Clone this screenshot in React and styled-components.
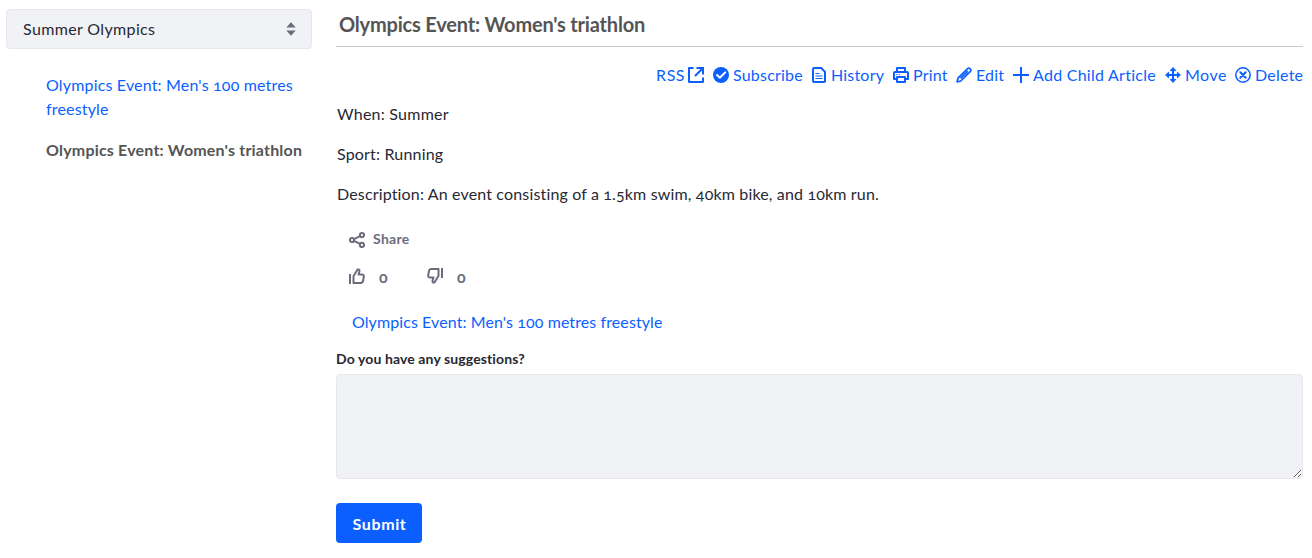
import React from "react";
import styled, { createGlobalStyle } from "styled-components";

const GlobalStyle = createGlobalStyle`
  *, *::before, *::after { box-sizing: border-box; }
  body {
    margin: 0;
    background: #fff;
    color: #272833;
    font-family: Lato, "Open Sans", sans-serif;
    font-size: 16px;
    line-height: 24px;
    font-variant-numeric: oldstyle-nums;
    font-variant-ligatures: none;
  }
`;

const Page = styled.div`
  display: grid;
  grid-template-columns: 306px 967px;
  column-gap: 24px;
  padding: 9px 9px 0 6px;
  height: 558px;
  overflow: hidden;
`;

const Text = styled.span`
  letter-spacing: ${(p) => p.$track || 0}px;
  white-space: nowrap;
`;

const Sidebar = styled.aside``;

const Select = styled.div`
  display: flex;
  align-items: center;
  justify-content: space-between;
  height: 40px;
  padding: 0 12px 0 16px;
  background: #f1f2f5;
  border: 1px solid #e7e7ed;
  border-radius: 4px;
`;

const Tree = styled.ul`
  list-style: none;
  margin: 0;
  padding: 24px 0 0 40px;
`;

const TreeItem = styled.li`
  margin-bottom: 17px;
  color: ${(p) => (p.$current ? "#555" : "#0b5fff")};
  font-weight: ${(p) => (p.$current ? 700 : 400)};
`;

const Main = styled.main``;

const Title = styled.h1`
  margin: 0;
  height: 38px;
  padding: 3px 0 0 3px;
  border-bottom: 1px solid #c8c9ca;
  color: #555;
  font-size: 20px;
  font-weight: 700;
  line-height: 24px;
`;

const Actions = styled.nav`
  display: flex;
  justify-content: flex-end;
  gap: 8px;
  height: 24px;
  margin-top: 16px;
`;

const Action = styled.a`
  display: flex;
  align-items: center;
  justify-content: ${(p) => (p.$end ? "flex-end" : "flex-start")};
  gap: ${(p) => (p.$end ? 3 : 4)}px;
  width: ${(p) => p.$width}px;
  margin-right: ${(p) => (p.$end ? 1 : 0)}px;
  color: #0b5fff;
`;

const Body = styled.div`
  padding: 15px 0 0 1px;
`;

const Paragraph = styled.p`
  margin: 0 0 16px;
`;

const Share = styled.button`
  display: flex;
  align-items: center;
  gap: 8px;
  height: 32px;
  margin: 18px 0 0;
  padding: 0 13px;
  border: 0;
  background: none;
  color: #6b6c7e;
  font: 700 14px/21px Lato, sans-serif;

  ${Text} {
    margin-top: -4px;
  }
`;

const Ratings = styled.div`
  display: flex;
  height: 32px;
  margin-top: 4px;
  padding-left: 13px;
`;

const Rating = styled.div`
  display: flex;
  align-items: center;
  gap: 14px;
  width: 78px;
  color: #6b6c7e;
  font-weight: 700;

  ${Text} {
    margin-top: 1px;
  }
`;

const ChildLink = styled.a`
  display: block;
  margin: 18px 0 0 16px;
  color: #0b5fff;
`;

const Label = styled.label`
  display: block;
  margin-top: 14px;
  font-size: 14px;
  font-weight: 700;
  line-height: 21px;
`;

const TextArea = styled.textarea`
  display: block;
  width: 967px;
  height: 105px;
  margin: 5px 0 24px;
  background: #f1f2f5;
  border: 1px solid #e7e7ed;
  border-radius: 4px;
  resize: vertical;
`;

const Submit = styled.button`
  width: 86px;
  height: 40px;
  padding: 2px 0 0 1px;
  border: 0;
  border-radius: 4px;
  background: #0b5fff;
  color: #fff;
  font: 700 16px/24px Lato, sans-serif;
`;

const Svg = styled.svg`
  display: block;
  flex: none;
  fill: none;
  stroke: currentColor;
  stroke-width: 2;
`;

const SortIcon = styled(Svg)`
  color: #6b6c7e;
`;

const Flip = styled(Svg)`
  transform: rotate(180deg);
`;

const shapes = {
  rss: (
    <>
      <path d="M5.5 1H1v14h14v-4.5" strokeLinejoin="round" />
      <path d="M8.5 1H15v6.5M14.5 1.5 7 9" />
    </>
  ),
  subscribe: (
    <>
      <circle cx="8" cy="8" r="8" fill="currentColor" stroke="none" />
      <path d="m4 8 2.8 2.8L12.2 5.4" stroke="#fff" strokeLinecap="round" strokeLinejoin="round" />
    </>
  ),
  history: (
    <>
      <path d="M2 2v12a1 1 0 0 0 1 1h10a1 1 0 0 0 1-1V4.8L10.2 1H3a1 1 0 0 0-1 1Z" />
      <path d="M4.5 6.5h4M4.5 9h7M4.5 11.5h7" strokeWidth="1" />
    </>
  ),
  print: (
    <>
      <path d="M4 4V1h8v3M4 12H1V6a1 1 0 0 1 1-1h12a1 1 0 0 1 1 1v6h-3" strokeLinejoin="round" />
      <path d="M4 10h8v5H4Z" strokeLinejoin="round" />
      <path d="M3.2 7.5h1.2M5.6 7.5h1.2" strokeWidth="1.2" />
    </>
  ),
  edit: (
    <path
      d="M1.1 14.9 2 11.2 11.6 1.6a1.6 1.6 0 0 1 2.2 0l.6.6a1.6 1.6 0 0 1 0 2.2L4.8 14ZM4.6 11.4 11.8 4.2"
      strokeWidth="1.7"
      strokeLinejoin="round"
    />
  ),
  add: <path d="M8 0v16M0 8h16" />,
  move: (
    <>
      <path d="M8 2v12M2 8h12" />
      <path
        d="M8 .6 10.8 3.6H5.2ZM8 15.4 5.2 12.4h5.6ZM.6 8 3.6 5.2v5.6ZM15.4 8 12.4 10.8V5.2Z"
        fill="currentColor"
        strokeWidth="1"
        strokeLinejoin="round"
      />
    </>
  ),
  remove: (
    <>
      <circle cx="8" cy="8" r="7.2" strokeWidth="1.5" />
      <path d="m5.3 5.3 5.4 5.4m0-5.4-5.4 5.4" strokeLinecap="round" />
    </>
  ),
  share: (
    <>
      <circle cx="3" cy="8" r="2.1" />
      <circle cx="13" cy="3.1" r="2.1" />
      <circle cx="13" cy="12.9" r="2.1" />
      <path d="m5 7.2 6-3M5 8.8l6 3" />
    </>
  ),
  thumb: (
    <>
      <path d="M1 6v10" />
      <path
        d="M4.5 15V8.2L8.2 2c.6-1 2.3-.8 2.3.6 0 1-.5 2.3-1 3.9H13c1.3 0 2 .9 1.8 2l-.7 4.3c-.3 1.5-1 2.2-2.5 2.2Z"
        strokeLinejoin="round"
      />
    </>
  ),
};

function Icon({ name, flipped }) {
  const Root = flipped ? Flip : Svg;
  return (
    <Root width="16" height="16" viewBox="0 0 16 16" aria-hidden="true">
      {shapes[name]}
    </Root>
  );
}

const actions = [
  { icon: "subscribe", label: "Subscribe", width: 90, track: 0.2 },
  { icon: "history", label: "History", width: 74, track: 0.2 },
  { icon: "print", label: "Print", width: 55, track: 0.2 },
  { icon: "edit", label: "Edit", width: 49, track: 0.2 },
  { icon: "add", label: "Add Child Article", width: 144, track: 0.26 },
  { icon: "move", label: "Move", width: 62, track: 0.5 },
  { icon: "remove", label: "Delete", width: 68, track: 0.25 },
];

export default function App() {
  return (
    <>
      <GlobalStyle />
      <Page>
        <Sidebar>
          <Select>
            <Text $track={0.36}>Summer Olympics</Text>
            <SortIcon width="16" height="16" viewBox="0 0 16 16" aria-hidden="true">
              <path
                d="M3.3 6.5 8 1.2 12.7 6.5ZM3.3 9.5 8 14.8 12.7 9.5Z"
                fill="currentColor"
                stroke="none"
              />
            </SortIcon>
          </Select>
          <Tree>
            <TreeItem>
              <Text $track={0.17}>
                Olympics Event: Men's 100 metres
                <br />
                freestyle
              </Text>
            </TreeItem>
            <TreeItem $current>
              <Text $track={0.19}>Olympics Event: Women's triathlon</Text>
            </TreeItem>
          </Tree>
        </Sidebar>
        <Main>
          <Title>
            <Text $track={-0.19}>Olympics Event: Women's triathlon</Text>
          </Title>
          <Actions>
            <Action $width={50} $end>
              <Text $track={0.5}>RSS</Text>
              <Icon name="rss" />
            </Action>
            {actions.map((a) => (
              <Action key={a.label} $width={a.width}>
                <Icon name={a.icon} />
                <Text $track={a.track}>{a.label}</Text>
              </Action>
            ))}
          </Actions>
          <Body>
            <Paragraph>
              <Text $track={0.24}>When: Summer</Text>
            </Paragraph>
            <Paragraph>
              <Text $track={0.18}>Sport: Running</Text>
            </Paragraph>
            <Paragraph>
              <Text $track={0.155}>
                Description: An event consisting of a 1.5km swim, 40km bike, and 10km run.
              </Text>
            </Paragraph>
          </Body>
          <Share>
            <Icon name="share" />
            <Text $track={0.3}>Share</Text>
          </Share>
          <Ratings>
            <Rating>
              <Icon name="thumb" />
              <Text>0</Text>
            </Rating>
            <Rating>
              <Icon name="thumb" flipped />
              <Text>0</Text>
            </Rating>
          </Ratings>
          <ChildLink>
            <Text $track={0.09}>Olympics Event: Men's 100 metres freestyle</Text>
          </ChildLink>
          <Label htmlFor="suggestions">
            <Text $track={0.11}>Do you have any suggestions?</Text>
          </Label>
          <TextArea id="suggestions" />
          <Submit>
            <Text $track={0.6}>Submit</Text>
          </Submit>
        </Main>
      </Page>
    </>
  );
}
